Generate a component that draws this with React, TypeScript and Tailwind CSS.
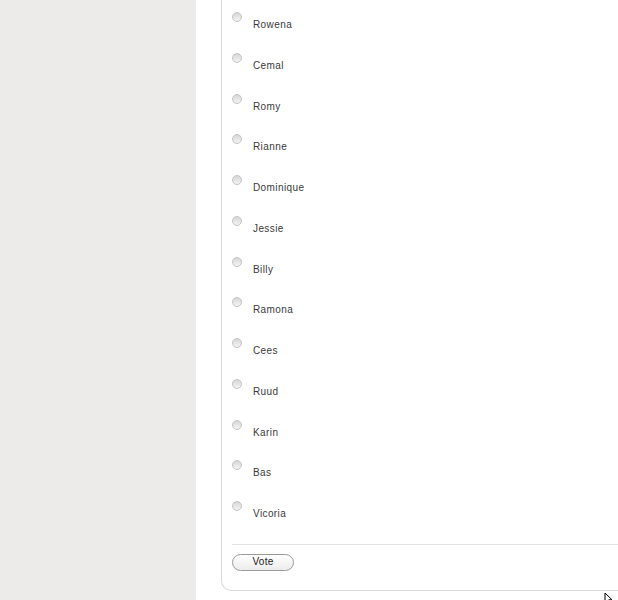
import React from 'react';

const names = [
    'Rowena', 'Cemal', 'Romy', 'Rianne', 'Dominique', 'Jessie', 'Billy',
    'Ramona', 'Cees', 'Ruud', 'Karin', 'Bas', 'Vicoria',
];

const Radio: React.FC = () => (
    <span className="block w-[10px] h-[10px] rounded-full border border-[#c4c4c4] bg-gradient-to-b from-[#d6d6d6] to-[#f4f4f4] shrink-0" />
);

export default function App() {
    return (
        <div className="flex w-[618px] h-[600px] overflow-hidden bg-white font-['Liberation_Sans',Arial,sans-serif] relative">
            {/* Sidebar */}
            <div className="w-[196px] h-full bg-[#edebe9] shrink-0" />

            {/* Poll */}
            <div className="flex-1 pl-[25px]">
                <div className="h-[591px] border-l border-b border-[#d9d9d9] rounded-bl-[10px] pl-[10px] flex flex-col">
                    <ul className="pt-[12px]">
                        {names.map((name) => (
                            <li key={name} className="h-[40.75px] flex items-start gap-[11px]">
                                <Radio />
                                <span className="mt-[7px] text-[10px] leading-[12px] tracking-[0.4px] text-[#3a3a3a]">{name}</span>
                            </li>
                        ))}
                    </ul>
                    <div className="mt-[2px] border-t border-[#e2e2e2]" />
                    <div className="pt-[9px]">
                        <button className="block w-[62px] h-[17px] rounded-full border border-[#9a9a9a] bg-gradient-to-b from-white to-[#ececec] text-[10px] leading-none text-[#222] tracking-[0.3px]">
                            Vote
                        </button>
                    </div>
                </div>
            </div>

            {/* Mouse cursor */}
            <svg className="absolute left-[604px] top-[592px]" width="10" height="12" viewBox="0 0 10 12">
                <path d="M1 1 L1 11 L3.5 8.5 L5.5 11 L6.5 10.5 L4.8 7.8 L8 7.8 Z" fill="white" stroke="black" strokeWidth="1" />
            </svg>
        </div>
    );
}
